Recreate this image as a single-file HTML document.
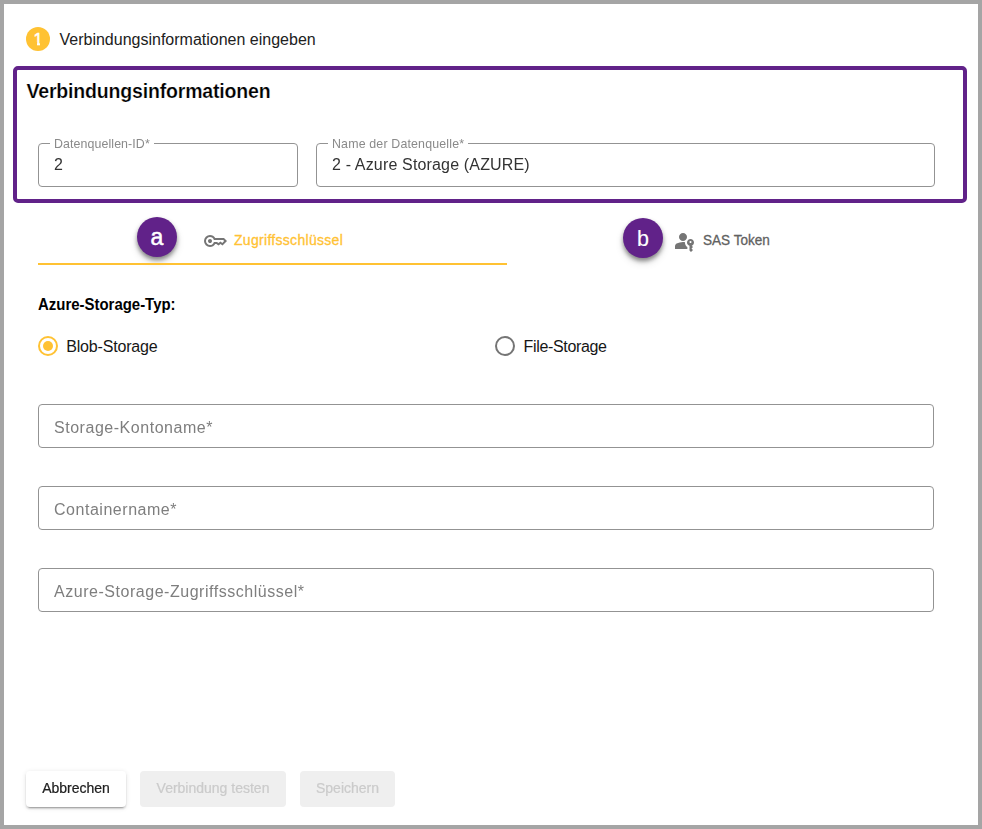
<!DOCTYPE html>
<html lang="de">
<head>
<meta charset="utf-8">
<title>Verbindungsinformationen eingeben</title>
<style>
*{box-sizing:border-box;margin:0;padding:0}
html,body{width:982px;height:829px;overflow:hidden;background:#a5a5a5}
body{font-family:"Liberation Sans",sans-serif;color:#212121;position:relative}
.page{position:absolute;left:4px;top:4px;width:974px;height:821px;background:#fff;box-shadow:0 0 1px #a5a5a5}
.abs{position:absolute;white-space:nowrap}
.stepnum{left:26px;top:27px;width:24px;height:24px;border-radius:50%;background:#ffc233;color:#fff;font-size:16.5px;line-height:25px;text-align:center;-webkit-text-stroke:.5px #fff}
.stepnum::before,.stepnum::after{content:"";position:absolute;top:15px;height:5px;width:4.9px;background:#ffc233}
.stepnum::before{left:6px}
.stepnum::after{left:13.9px}
.steptitle{left:59.5px;top:30px;font-size:16px;font-weight:normal;line-height:20px;color:#212121}
.box{left:13px;top:66px;width:954px;height:137px;border:4px solid #612289;border-radius:5px}
.boxtitle{left:26.5px;top:79px;font-size:19.5px;line-height:24px;font-weight:bold;-webkit-text-stroke:.22px #fff;color:#000;letter-spacing:-.17px}
.field{border:1px solid #939393;border-radius:4px;height:44px;background:#fff}
.flabel{font-size:12.4px;line-height:14px;color:#8a8a8a;background:#fff;padding:0 4px}
.fval{font-size:16px;line-height:20px;color:#333}
.ph{font-size:16px;line-height:20px;color:#7e7e7e;letter-spacing:.53px}
.circle{width:40px;height:40px;border-radius:50%;background:#612289;color:#fff;font-size:23px;line-height:40px;text-align:center;-webkit-text-stroke:.5px #fff;box-shadow:0 3px 4px rgba(0,0,0,.42),0 5px 9px rgba(0,0,0,.12)}
.tab{font-size:14px;line-height:20px;-webkit-text-stroke:.3px currentColor}
.inkbar{left:38px;top:263px;width:469px;height:2px;background:#ffc233}
.h{left:38px;top:295px;font-size:16px;line-height:20px;font-weight:bold;color:#000;transform:scaleX(.934);transform-origin:0 0}
.radio{width:20px;height:20px;border-radius:50%;border:2px solid #757575}
.radio.on{border-color:#ffc233}
.radio.on::after{content:"";position:absolute;left:3px;top:3px;width:10px;height:10px;border-radius:50%;background:#ffc233}
.rlabel{font-size:16px;line-height:20px;color:#161616}
.btn{top:771px;height:36px;border:0;padding:0 0 2px;margin:0;font-family:inherit;display:block;border-radius:4px;font-size:14px;line-height:34px;text-align:center;-webkit-text-stroke:.22px currentColor}
.flabel,.fval,.ph,.btn{will-change:transform}
.btn.raised{background:#fff;color:#212121;box-shadow:0 3px 1px -2px rgba(0,0,0,.2),0 2px 2px 0 rgba(0,0,0,.14),0 1px 5px 0 rgba(0,0,0,.12)}
.btn.dis{background:#efefef;color:#cbcbcb}
</style>
</head>
<body>
<div class="page"></div>

<div class="abs stepnum">1</div>
<h1 class="abs steptitle">Verbindungsinformationen eingeben</h1>

<div class="abs box"></div>
<h2 class="abs boxtitle">Verbindungsinformationen</h2>

<div class="abs field" style="left:38px;top:143px;width:260px"></div>
<div class="abs flabel" style="left:50px;top:137px;letter-spacing:.09px">Datenquellen-ID*</div>
<div class="abs fval" style="left:54px;top:155px">2</div>

<div class="abs field" style="left:316px;top:143px;width:619px"></div>
<div class="abs flabel" style="left:328px;top:137px;letter-spacing:.16px">Name der Datenquelle*</div>
<div class="abs fval" style="left:332px;top:155px;letter-spacing:.16px">2 - Azure Storage (AZURE)</div>

<div class="abs circle" style="left:137px;top:217px">a</div>
<svg class="abs" style="left:203px;top:229px" width="24" height="24" viewBox="0 0 24 24"><path fill="#757575" d="M7 14q-.825 0-1.412-.588T5 12q0-.825.588-1.412T7 10q.825 0 1.413.588T9 12q0 .825-.587 1.413T7 14Zm0 4q-2.500 0-4.250-1.750T1 12q0-2.500 1.750-4.250T7 6q1.675 0 3.038.825T12.200 9H21l3 3-4.500 4.500-2-1.500-2 1.500L13.375 15H12.200q-.800 1.350-2.162 2.175T7 18Zm0-2q1.400 0 2.463-.850T10.875 13H14l1.450 1.025L17.500 12.500l1.775 1.375L21.150 12l-1-1h-9.275q-.350-1.300-1.412-2.150T7 8Q5.350 8 4.175 9.175T3 12q0 1.650 1.175 2.825T7 16Z"/></svg>
<div class="abs tab" style="left:234px;top:230px;color:#ffc233;letter-spacing:.3px">Zugriffsschlüssel</div>
<div class="abs inkbar"></div>

<div class="abs circle" style="left:623px;top:218px;font-size:21.5px;line-height:43px;-webkit-text-stroke:.15px #fff">b</div>
<svg class="abs" style="left:672px;top:229px" width="24" height="24" viewBox="0 0 24 24"><path fill="#757575" d="M3 20v-2.800q0-.850.438-1.563T4.600 14.550q1.550-.775 3.150-1.163T11 13q.500 0 1 .038t1 .112q-.100 1.450.525 2.738T15.350 18v2H3Zm16 3-1.500-1.500v-4.650q-1.100-.325-1.800-1.238T15 13.500q0-1.450 1.025-2.475T18.500 10q1.450 0 2.475 1.025T22 13.500q0 1.125-.638 2-.637.875-1.612 1.250L21 18l-1.500 1.500L21 21l-2 2ZM11 12q-1.650 0-2.825-1.175T7 8q0-1.650 1.175-2.825T11 4q1.650 0 2.825 1.175T15 8q0 1.650-1.175 2.825T11 12Zm7.500 2q.425 0 .713-.288T19.500 13q0-.425-.288-.713T18.500 12q-.425 0-.713.288T17.500 13q0 .425.288.713T18.500 14Z"/></svg>
<div class="abs tab" style="left:703px;top:230px;color:#616161;transform:scaleX(.968);transform-origin:0 0">SAS Token</div>

<h3 class="abs h">Azure-Storage-Typ:</h3>

<div class="abs radio on" style="left:38px;top:336px"></div>
<div class="abs rlabel" style="left:66.2px;top:337px;letter-spacing:-.17px">Blob-Storage</div>
<div class="abs radio" style="left:495px;top:336px"></div>
<div class="abs rlabel" style="left:523.6px;top:337px;letter-spacing:-.34px">File-Storage</div>

<div class="abs field" style="left:38px;top:404px;width:896px"></div>
<div class="abs ph" style="left:54px;top:418px">Storage-Kontoname*</div>
<div class="abs field" style="left:38px;top:486px;width:896px"></div>
<div class="abs ph" style="left:54px;top:500px">Containername*</div>
<div class="abs field" style="left:38px;top:568px;width:896px"></div>
<div class="abs ph" style="left:54px;top:582px">Azure-Storage-Zugriffsschlüssel*</div>

<button type="button" class="abs btn raised" style="left:26px;width:100px">Abbrechen</button>
<button type="button" disabled class="abs btn dis" style="left:140px;width:146px">Verbindung testen</button>
<button type="button" disabled class="abs btn dis" style="left:300px;width:95px">Speichern</button>
</body>
</html>
